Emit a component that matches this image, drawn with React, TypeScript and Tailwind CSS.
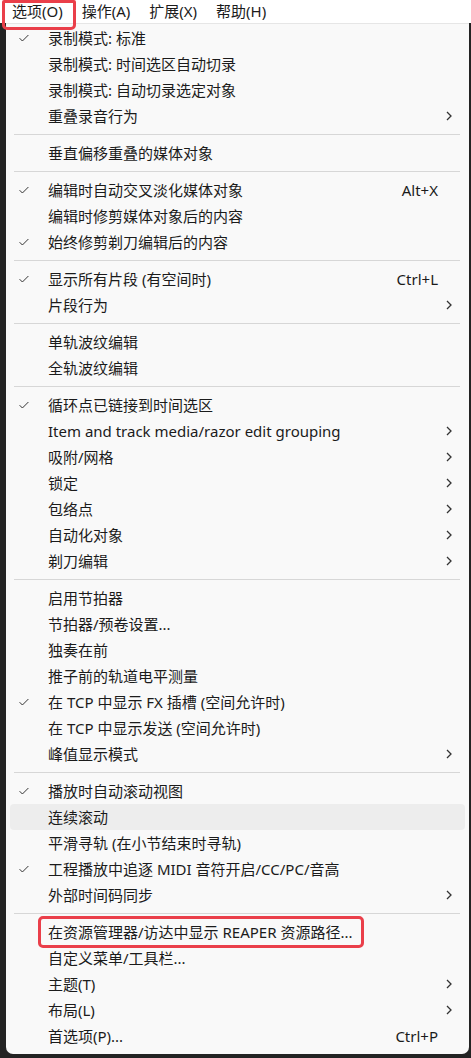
import React from 'react';

type Entry =
  | { kind: 'sep' }
  | {
      kind: 'item';
      label: string;
      checked?: boolean;
      shortcut?: string;
      submenu?: boolean;
      hover?: boolean;
      marked?: boolean;
    };

const sep: Entry = { kind: 'sep' };
const item = (label: string, opts: Partial<Omit<Extract<Entry, { kind: 'item' }>, 'kind' | 'label'>> = {}): Entry => ({
  kind: 'item',
  label,
  ...opts,
});

const MENU: Entry[] = [
  item('录制模式: 标准', { checked: true }),
  item('录制模式: 时间选区自动切录'),
  item('录制模式: 自动切录选定对象'),
  item('重叠录音行为', { submenu: true }),
  sep,
  item('垂直偏移重叠的媒体对象'),
  sep,
  item('编辑时自动交叉淡化媒体对象', { checked: true, shortcut: 'Alt+X' }),
  item('编辑时修剪媒体对象后的内容'),
  item('始终修剪剃刀编辑后的内容', { checked: true }),
  sep,
  item('显示所有片段 (有空间时)', { checked: true, shortcut: 'Ctrl+L' }),
  item('片段行为', { submenu: true }),
  sep,
  item('单轨波纹编辑'),
  item('全轨波纹编辑'),
  sep,
  item('循环点已链接到时间选区', { checked: true }),
  item('Item and track media/razor edit grouping', { submenu: true }),
  item('吸附/网格', { submenu: true }),
  item('锁定', { submenu: true }),
  item('包络点', { submenu: true }),
  item('自动化对象', { submenu: true }),
  item('剃刀编辑', { submenu: true }),
  sep,
  item('启用节拍器'),
  item('节拍器/预卷设置...'),
  item('独奏在前'),
  item('推子前的轨道电平测量'),
  item('在 TCP 中显示 FX 插槽 (空间允许时)', { checked: true }),
  item('在 TCP 中显示发送 (空间允许时)'),
  item('峰值显示模式', { submenu: true }),
  sep,
  item('播放时自动滚动视图', { checked: true }),
  item('连续滚动', { hover: true }),
  item('平滑寻轨 (在小节结束时寻轨)'),
  item('工程播放中追逐 MIDI 音符开启/CC/PC/音高', { checked: true }),
  item('外部时间码同步', { submenu: true }),
  sep,
  item('在资源管理器/访达中显示 REAPER 资源路径...', { marked: true }),
  item('自定义菜单/工具栏...'),
  item('主题(T)', { submenu: true }),
  item('布局(L)', { submenu: true }),
  item('首选项(P)...', { shortcut: 'Ctrl+P' }),
];

const Check = () => (
  <svg width="10" height="8" viewBox="0 0 10 8" fill="none">
    <path d="M0.6 4.2 L3.4 7 L9.4 1" stroke="#333" strokeWidth="1" />
  </svg>
);

const Chevron = () => (
  <svg width="6" height="10" viewBox="0 0 6 10" fill="none">
    <path d="M1 1 L5 5 L1 9" stroke="#333" strokeWidth="1.3" />
  </svg>
);

export default function App() {
  return (
    <div
      className="relative w-[471px] h-[1058px] overflow-hidden bg-[#232323] text-[#1b1b1b]"
      style={{ fontFamily: '"Segoe UI", "Noto Sans", "Noto Sans CJK SC", sans-serif' }}
    >
      {/* menu bar */}
      <div className="h-[23px] bg-white flex items-center pl-[12px] gap-[19px] text-[15px] leading-none">
        <span>选项(O)</span>
        <span>操作(A)</span>
        <span>扩展(X)</span>
        <span>帮助(H)</span>
      </div>

      {/* dropdown */}
      <div className="pl-[6px] pr-[2px]">
        <div className="bg-[#f9f9f9] border-t border-[#e6e6e6] rounded-b-[7px] px-[4px] pt-[1px] pb-[5px] text-[15px]">
          {MENU.map((e, i) =>
            e.kind === 'sep' ? (
              <div key={i} className="h-[11px] flex items-center pl-[4px] pr-[5px]">
                <div className="h-px w-full bg-[#d7d7d7]" />
              </div>
            ) : (
              <div
                key={i}
                className={`relative h-[26px] flex items-center rounded-[4px] ${e.hover ? 'bg-[#ededed]' : ''}`}
              >
                <div className="w-[38px] pl-[9px] flex items-center">{e.checked && <Check />}</div>
                <span className="flex-1 whitespace-nowrap">{e.label}</span>
                {e.shortcut && <span className="mr-[27px]">{e.shortcut}</span>}
                {e.submenu && (
                  <span className="mr-[13px] flex items-center">
                    <Chevron />
                  </span>
                )}
                {e.marked && (
                  <span className="absolute left-[28px] top-[-3px] w-[326px] h-[32px] border-[3px] border-[#ea3f4a] rounded-[5px]" />
                )}
              </div>
            )
          )}
        </div>
      </div>

      {/* highlight around the open menu title */}
      <span className="absolute left-[2px] top-0 w-[74px] h-[30px] border-[3px] border-[#ea3f4a] rounded-b-[5px] rounded-t-[2px]" />
    </div>
  );
}
